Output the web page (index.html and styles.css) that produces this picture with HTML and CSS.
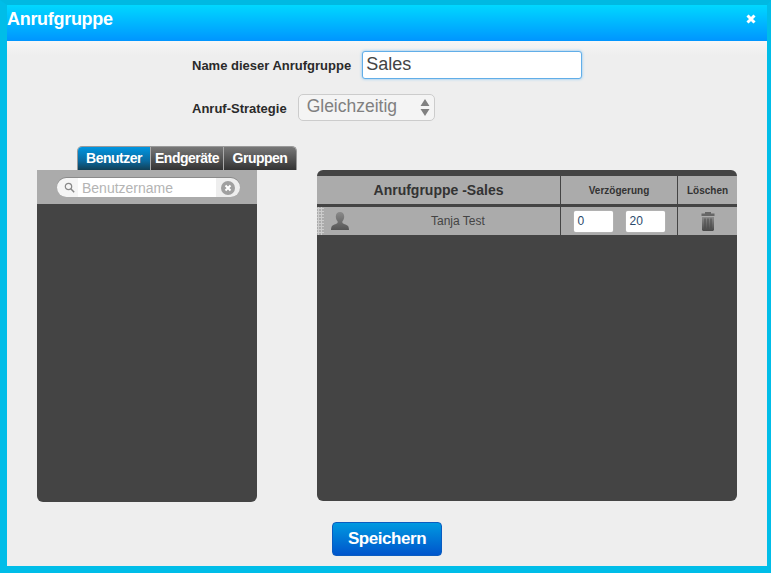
FILE: index.html
```html
<!DOCTYPE html>
<html lang="de">
<head>
    <meta charset="UTF-8">
    <meta name="viewport" content="width=device-width, initial-scale=1.0">
    <title>Anrufgruppe</title>
    <link rel="stylesheet" href="styles.css">
</head>
<body>
    <div class="dialog">
        <div class="header">
            <h1>Anrufgruppe</h1>
            <svg class="close" width="10" height="10" viewBox="0 0 10 10"><path d="M1.5 1.5l7 7M8.500 1.500l-7 7" stroke="#fff" stroke-width="3"/></svg>
        </div>
        <div class="content">
            <div class="form-row name-row">
                <label>Name dieser Anrufgruppe</label>
                <div class="name-input">Sales</div>
            </div>
            <div class="form-row strategy-row">
                <label>Anruf-Strategie</label>
                <div class="select">
                    <span>Gleichzeitig</span>
                    <svg width="10" height="17" viewBox="0 0 10 17"><path d="M5 0l4.500 7H.5zM5 17L.5 10h9z" fill="#808080"/></svg>
                </div>
            </div>
            <div class="tabs">
                <div class="tab active">Benutzer</div>
                <div class="tab">Endgeräte</div>
                <div class="tab">Gruppen</div>
            </div>
            <div class="panels">
                <div class="panel-left">
                    <div class="search-bar">
                        <div class="search">
                            <svg width="11" height="11" viewBox="0 0 11 11"><circle cx="4.500" cy="4.500" r="3.200" fill="none" stroke="#888" stroke-width="1.200"/><path d="M7 7l3.200 3.200" stroke="#888" stroke-width="1.500"/></svg>
                            <span class="placeholder">Benutzername</span>
                            <svg class="clear" width="14" height="14" viewBox="0 0 14 14"><circle cx="7" cy="7" r="7" fill="#a0a0a0"/><path d="M4.500 4.500l5 5M9.500 4.500l-5 5" stroke="#fff" stroke-width="2"/></svg>
                        </div>
                    </div>
                </div>
                <div class="panel-right">
                    <div class="table-head">
                        <div class="col-name">Anrufgruppe -Sales</div>
                        <div class="col-delay">Verzögerung</div>
                        <div class="col-delete">Löschen</div>
                    </div>
                    <div class="table-row">
                        <div class="col-name">
                            <span class="grip"></span>
                            <svg class="user" width="18" height="18" viewBox="0 0 18 18"><defs><linearGradient id="userFill" x1="0" y1="0" x2="0" y2="1"><stop offset="0" stop-color="#8a8a8a"/><stop offset="1" stop-color="#555"/></linearGradient></defs><path d="M9 0c2.700 0 4.200 1.800 4.200 4.500 0 2-.8 3.800-1.800 4.800v1.500c0 1 4.100 1.600 5.600 3.200.5.600.9 2 1 4H0c.1-2 .5-3.400 1-4 1.500-1.600 5.600-2.200 5.600-3.200V9.300c-1-1-1.800-2.800-1.800-4.800C4.800 1.800 6.300 0 9 0z" fill="url(#userFill)"/></svg>
                            <span class="user-name">Tanja Test</span>
                        </div>
                        <div class="col-delay">
                            <div class="num">0</div>
                            <div class="num">20</div>
                        </div>
                        <div class="col-delete">
                            <svg width="14" height="19" viewBox="0 0 14 19"><defs><linearGradient id="binFill" x1="0" y1="0" x2="0" y2="1"><stop offset="0" stop-color="#8a8a8a"/><stop offset="1" stop-color="#484848"/></linearGradient></defs><path d="M4 0h6v1.500h3.500V4H.5V1.500H4z" fill="#666"/><path d="M1 5h12v13l-1 1H2l-1-1z" fill="url(#binFill)"/><path d="M4 6.500v10M7 6.500v10M10 6.500v10" stroke="#4a4a4a" stroke-width="1"/></svg>
                        </div>
                    </div>
                </div>
            </div>
            <div class="actions">
                <button class="save">Speichern</button>
            </div>
        </div>
    </div>
</body>
</html>
```

FILE: styles.css
```css
html, body {
    height: 100%;
    margin: 0;
    padding: 0;
    font-family: "Liberation Sans", Arial, sans-serif;
}
body {
    background-color: #00bce6;
}
.dialog {
    box-sizing: border-box;
    height: 573px;
    border-style: solid;
    border-color: #00b9e2 #00bde8 #00bde8;
    border-width: 5px 4px 7px 7px;
    background-color: #eee;
    display: flex;
    flex-direction: column;
}
.header {
    height: 36px;
    flex: none;
    display: flex;
    align-items: flex-start;
    justify-content: space-between;
    background: linear-gradient(#00d8ff, #0095ff);
}
h1 {
    margin: 4px 0 0;
    font-size: 18px;
    line-height: 20px;
    letter-spacing: -0.3px;
    color: #fff;
}
.close {
    margin: 9px 11px 0 0;
}
.content {
    flex: 1;
    display: flex;
    flex-direction: column;
    background: linear-gradient(#f6f6f6, #eee 14px);
}
.form-row {
    display: flex;
    align-items: center;
}
label {
    padding-top: 1px;
    font-size: 13px;
    font-weight: bold;
    color: #2a2a2a;
}
.name-row {
    margin: 10px 0 0 185px;
    height: 28px;
}
.name-input {
    box-sizing: border-box;
    width: 220px;
    height: 28px;
    margin-left: 11px;
    padding: 0 3px;
    background-color: #fff;
    border: 1px solid #62aee8;
    border-radius: 3px;
    box-shadow: 0 0 3px #7cc0f2;
    font-size: 18px;
    line-height: 24px;
    color: #444;
}
.strategy-row {
    margin: 15px 0 0 185px;
    height: 27px;
}
.select {
    box-sizing: border-box;
    width: 137px;
    height: 27px;
    margin-left: 11px;
    padding: 0 4px 0 8px;
    display: flex;
    align-items: center;
    justify-content: space-between;
    background-color: #f4f4f4;
    border: 1px solid #ccc;
    border-radius: 5px;
    font-size: 17.500px;
    color: #808080;
}
.select span {
    margin-top: -2px;
}
.tabs {
    display: flex;
    width: 220px;
    height: 24px;
    margin: 25px 0 0 70px;
    box-sizing: border-box;
    border: 1px solid #999;
    border-bottom: none;
    border-radius: 5px 5px 0 0;
    overflow: hidden;
}
.tab {
    flex: 1;
    text-align: center;
    font-size: 14px;
    font-weight: bold;
    line-height: 22px;
    letter-spacing: -0.5px;
    color: #fff;
    background: linear-gradient(#777, #333);
    border-left: 1px solid #aaa;
}
.tab:first-child {
    border-left: none;
}
.tab.active {
    background: linear-gradient(#0095e0, #0a6aa0 60%, #123f55);
}
.panels {
    display: flex;
    gap: 60px;
    margin-left: 30px;
}
.panel-left {
    width: 220px;
    height: 332px;
    background-color: #444;
    border-radius: 0 0 6px 6px;
}
.search-bar {
    height: 34px;
    box-sizing: border-box;
    padding-top: 8px;
    background-color: #ababab;
}
.search {
    box-sizing: border-box;
    width: 183px;
    height: 19px;
    margin-left: 20px;
    padding: 0 5px 0 7px;
    display: flex;
    align-items: center;
    background: linear-gradient(90deg, #f5f5f5 21px, #fff 21px, #fff 159px, #eee 159px);
    border-radius: 10px;
    box-shadow: 0 -1px 0 #8a8a8a;
}
.placeholder {
    flex: 1;
    margin-left: 7px;
    font-size: 14px;
    color: #b4b4b4;
}
.panel-right {
    width: 420px;
    height: 331px;
    box-sizing: border-box;
    padding-top: 6px;
    background-color: #444;
    border-radius: 6px;
}
.table-head, .table-row {
    display: flex;
    height: 28px;
    background-color: #ababab;
    color: #333;
}
.table-row {
    margin-top: 3px;
}
.col-name {
    width: 243px;
    display: flex;
    align-items: center;
    justify-content: center;
    font-size: 14px;
    font-weight: bold;
}
.col-delay {
    width: 117px;
    box-sizing: border-box;
    display: flex;
    align-items: center;
    justify-content: center;
    gap: 13px;
    border-left: 1px solid #444;
    font-size: 10px;
    font-weight: bold;
}
.col-delete {
    flex: 1;
    display: flex;
    align-items: center;
    justify-content: center;
    border-left: 1px solid #444;
    font-size: 10px;
    font-weight: bold;
}
.table-row .col-name {
    justify-content: flex-start;
    font-size: 12px;
    font-weight: normal;
    color: #444;
}
.grip {
    width: 7px;
    height: 28px;
    flex: none;
    background-image: radial-gradient(#ccc 1px, transparent 1.200px);
    background-size: 3px 3px;
}
.user {
    margin-left: 7px;
}
.user-name {
    margin-left: 82px;
}
.num {
    box-sizing: border-box;
    width: 39px;
    height: 21px;
    padding-left: 4px;
    background-color: #fff;
    border-radius: 2px;
    box-shadow: 0 0 1px #e4e4e4;
    font-size: 12px;
    font-weight: normal;
    line-height: 21px;
    color: #2b4a6b;
}
.actions {
    margin: 20px 0 0 325px;
}
.save {
    width: 110px;
    height: 34px;
    padding: 0;
    border: 1px solid #0a5cc0;
    border-radius: 4px;
    background: linear-gradient(#0099e0, #0055cc);
    font-family: inherit;
    font-size: 17px;
    font-weight: bold;
    letter-spacing: -0.45px;
    color: #fff;
}
```
